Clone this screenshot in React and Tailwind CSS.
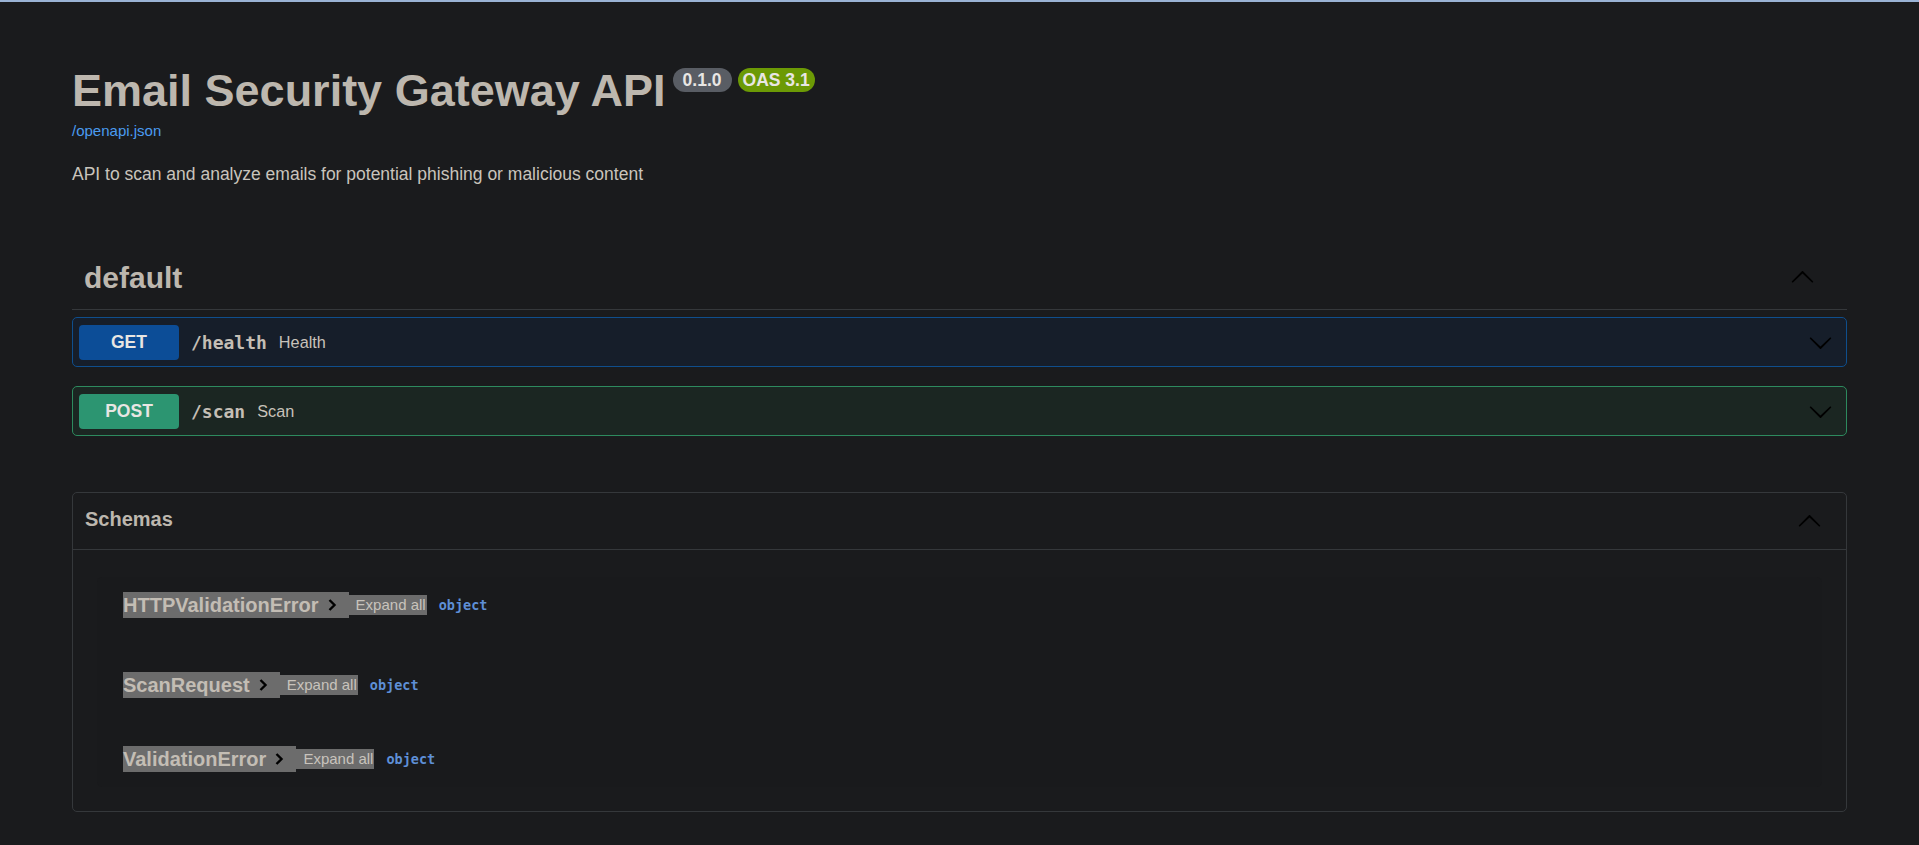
import React from 'react';

const sans = { fontFamily: '"Liberation Sans", Arial, sans-serif' };

function Arrow({ up, className }) {
  return (
    <svg viewBox="0 0 20 20" className={`${className} ${up ? 'rotate-180' : ''}`} fill="#000">
      <path d="M17.418 6.109c.272-.268.709-.268.979 0s.271.701 0 .969l-7.908 7.83c-.27.268-.707.268-.979 0l-7.908-7.83c-.27-.268-.27-.701 0-.969.271-.268.709-.268.979 0L10 13.25l7.418-7.141z" />
    </svg>
  );
}

function Opblock({ method, path, summary, colors }) {
  return (
    <div className={`flex items-center h-[50px] rounded-[5px] border ${colors.box} pl-[6px] pr-[13px]`}>
      <div className={`w-[100px] h-[35px] rounded-[4px] ${colors.badge} flex items-center justify-center text-[17.5px] font-bold text-[#e8e6e3]`}>
        {method}
      </div>
      <span className="px-[12px] text-[18px] font-bold text-[#c4beb5] font-['DejaVu_Sans_Mono',monospace]">{path}</span>
      <span className="text-[16.25px] text-[#c8c2ba]">{summary}</span>
      <div className="flex-1" />
      <Arrow className="w-[25px] h-[25px]" />
    </div>
  );
}

function SchemaRow({ name, className }) {
  return (
    <div className={`flex items-center h-[26px] ${className}`}>
      <div className="flex items-center h-[26px] bg-[#6c6c6c]">
        <span className="text-[20px] font-bold text-[#c3bdb4] leading-[26px]">{name}</span>
        <svg viewBox="0 0 10 14" className="w-[10px] h-[14px] ml-[8px] mr-[12px]" fill="none" stroke="#000" strokeWidth="2.4">
          <path d="M2.5 2 L7.5 7 L2.5 12" />
        </svg>
      </div>
      <div className="h-[20px] flex items-center bg-[#6c6c6c] pl-[7px] pr-[1px] text-[15px] text-[#c8c3bc]">Expand all</div>
      <span className="ml-[12px] text-[13.5px] font-bold text-[#5e8fd6] font-['DejaVu_Sans_Mono',monospace]">object</span>
    </div>
  );
}

export default function App() {
  return (
    <div className="min-h-screen w-full bg-[#1a1b1d]" style={sans}>
      <div className="h-[2px] bg-[#9ab3d5]" />
      <div className="px-[72px]">
        {/* info */}
        <div className="pt-[63px]">
          <div className="flex items-start">
            <h1 className="text-[45px] leading-[52px] font-bold text-[#bdb7ae]">Email Security Gateway API</h1>
            <span className="ml-[7px] mt-[3px] h-[24px] px-[10px] rounded-full bg-[#595d64] text-[17.5px] font-bold text-[#e8e6e3] leading-[24px]">0.1.0</span>
            <span className="ml-[6px] mt-[3px] h-[24px] px-[5px] rounded-full bg-[#6c9a05] text-[17.5px] font-bold text-[#e8e6e3] leading-[24px]">OAS 3.1</span>
          </div>
          <a className="block mt-[5px] text-[15px] leading-[17px] text-[#4a9bf0]">/openapi.json</a>
          <p className="mt-[25px] text-[17.5px] leading-[20px] text-[#c9c4bc]">API to scan and analyze emails for potential phishing or malicious content</p>
        </div>

        {/* default tag */}
        <div className="mt-[62px] flex items-center h-[64px] border-b border-[#35383b] pl-[12px] pr-[32px]">
          <h2 className="text-[30px] font-bold text-[#bdb7ae] leading-[38px]">default</h2>
          <div className="flex-1" />
          <Arrow up className="w-[25px] h-[25px]" />
        </div>

        <div className="mt-[7px]">
          <Opblock
            method="GET"
            path="/health"
            summary="Health"
            colors={{ box: 'border-[#0f4e8c] bg-[#161e2a]', badge: 'bg-[#0c4d97]' }}
          />
        </div>
        <div className="mt-[19px]">
          <Opblock
            method="POST"
            path="/scan"
            summary="Scan"
            colors={{ box: 'border-[#2d8a5e] bg-[#1b2622]', badge: 'bg-[#2c9571]' }}
          />
        </div>

        {/* schemas */}
        <div className="mt-[56px] rounded-[5px] border border-[#35383b]">
          <div className="flex items-center h-[57px] border-b border-[#35383b] pl-[12px] pr-[24px]">
            <h4 className="mb-[4px] text-[20px] font-bold text-[#bdb7ae]">Schemas</h4>
            <div className="flex-1" />
            <Arrow up className="w-[25px] h-[25px]" />
          </div>
          <div className="pt-[27px] pb-[24px]">
            <div className="mx-[24px] rounded-[5px] bg-[#191a1c] px-[26px] py-[15px]">
              <SchemaRow name="HTTPValidationError" />
              <SchemaRow name="ScanRequest" className="mt-[54px]" />
              <SchemaRow name="ValidationError" className="mt-[48px]" />
            </div>
          </div>
        </div>
      </div>
    </div>
  );
}
